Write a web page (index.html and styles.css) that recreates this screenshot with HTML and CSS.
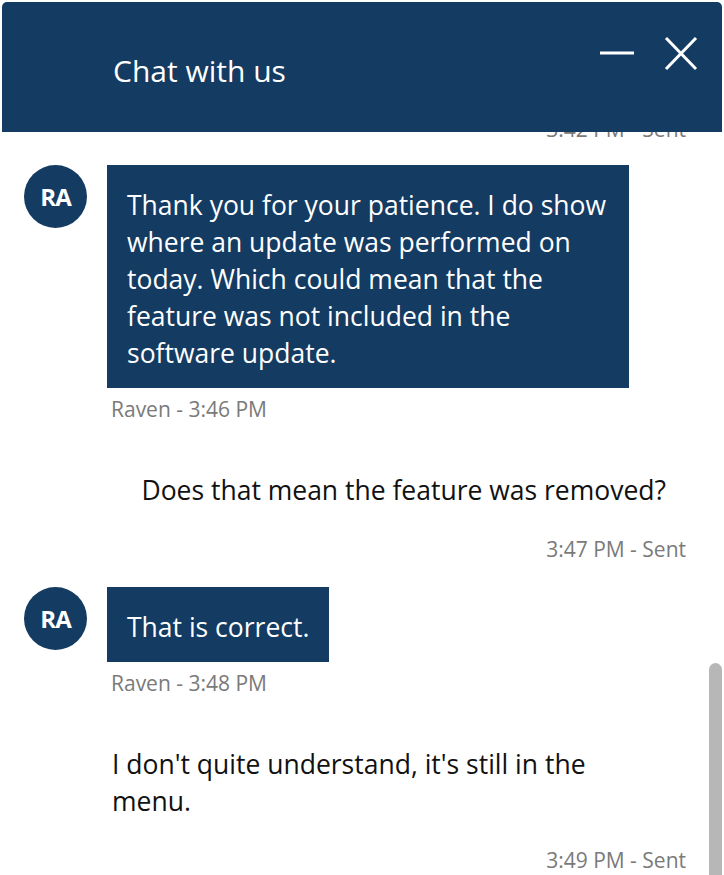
FILE: index.html
```html
<!DOCTYPE html>
<html lang="en">
<head>
<meta charset="utf-8">
<title>Chat with us</title>
<link rel="stylesheet" href="styles.css">
</head>
<body>
<div class="widget">
  <header class="header">
    <h1 class="title">Chat with us</h1>
    <div class="controls">
      <button class="ctl" aria-label="Minimize">
        <svg width="34" height="34" viewBox="0 0 34 34"><line x1="0" y1="16" x2="34" y2="16" stroke="#fff" stroke-width="3"/></svg>
      </button>
      <button class="ctl" aria-label="Close">
        <svg width="34" height="34" viewBox="0 0 34 34"><path d="M2 1 L32 32 M32 1 L2 32" stroke="#fff" stroke-width="3" fill="none"/></svg>
      </button>
    </div>
  </header>
  <main class="messages">
    <div class="stamp clipped">3:42 PM - Sent</div>

    <div class="row received first">
      <div class="avatar">RA</div>
      <div class="col">
        <div class="bubble">Thank you for your patience. I do show where an update was performed on today. Which could mean that the feature was not included in the software update.</div>
        <div class="meta">Raven - 3:46 PM</div>
      </div>
    </div>

    <div class="row sent">
      <div class="sent-text">Does that mean the feature was removed?</div>
      <div class="stamp">3:47 PM - Sent</div>
    </div>

    <div class="row received second">
      <div class="avatar">RA</div>
      <div class="col">
        <div class="bubble">That is correct.</div>
        <div class="meta">Raven - 3:48 PM</div>
      </div>
    </div>

    <div class="row sent">
      <div class="sent-text wide">I don't quite understand, it's still in the menu.</div>
      <div class="stamp">3:49 PM - Sent</div>
    </div>

    <div class="scroll-thumb"></div>
  </main>
</div>
</body>
</html>
```

FILE: styles.css
```css
* { box-sizing: border-box; }
html, body {
  margin: 0;
  padding: 0;
  background: #ffffff;
  overflow: hidden;
}
body {
  font-family: "Open Sans", "Noto Sans", sans-serif;
}
.widget {
  width: 724px;
  height: 875px;
  display: flex;
  flex-direction: column;
}
.header {
  flex: 0 0 130px;
  margin: 2px 2px 0 2px;
  background: #143b62;
  border-radius: 5px 5px 0 0;
  display: flex;
  justify-content: space-between;
  align-items: flex-start;
}
.title {
  margin: 0;
  padding: 51px 0 0 111px;
  font-size: 30px;
  line-height: 36px;
  font-weight: 400;
  color: #ffffff;
}
.controls {
  display: flex;
  gap: 30px;
  padding: 35px 24px 0 0;
}
.ctl {
  border: 0;
  padding: 0;
  margin: 0;
  background: transparent;
  width: 34px;
  height: 34px;
  display: block;
}
.ctl svg { display: block; }
.messages {
  position: relative;
  flex: 1 1 auto;
  overflow: hidden;
  display: flex;
  flex-direction: column;
  padding: 0 38px 0 24px;
}
.stamp {
  align-self: flex-end;
  font-size: 21px;
  line-height: 24px;
  color: #7a7a7a;
  margin-top: 9px;
}
.stamp.clipped {
  margin-top: -15px;
}
.row.received {
  display: flex;
  align-items: flex-start;
  gap: 20px;
}
.row.first { margin-top: 24px; }
.row.second { margin-top: 26px; }
.avatar {
  flex: 0 0 63px;
  width: 63px;
  height: 63px;
  border-radius: 50%;
  background: #143b62;
  color: #ffffff;
  font-weight: 700;
  font-size: 24px;
  letter-spacing: -1px;
  display: flex;
  align-items: center;
  justify-content: center;
}
.col {
  display: flex;
  flex-direction: column;
  align-items: flex-start;
}
.bubble {
  max-width: 522px;
  background: #143b62;
  color: #ffffff;
  font-size: 26.5px;
  line-height: 37px;
  padding: 22px 20px 16px 20px;
}
.meta {
  margin-top: 9px;
  padding-left: 4px;
  font-size: 21px;
  line-height: 24px;
  color: #7a7a7a;
}
.row.sent {
  display: flex;
  flex-direction: column;
  align-items: flex-end;
  margin-top: 30px;
}
.sent-text {
  max-width: 594px;
  padding: 21px 20px 19px 20px;
  font-size: 26.5px;
  line-height: 37px;
  color: #111111;
}
.scroll-thumb {
  position: absolute;
  right: 2px;
  top: 531px;
  bottom: 0;
  width: 13px;
  border-radius: 7px 7px 0 0;
  background: #b7b7b7;
}
```
